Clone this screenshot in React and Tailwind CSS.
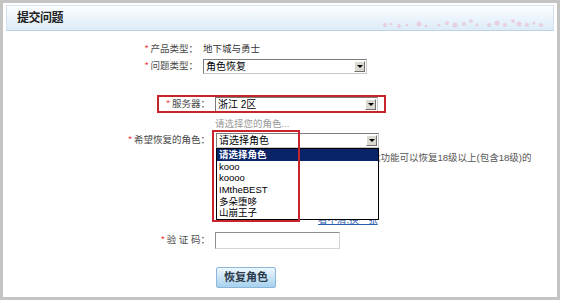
import React from 'react'

const Req = ({ children, className = '' }) => (
  <div className={`text-right text-[#484848] ${className}`}>
    <span className="text-[#e33] mr-[2px] relative -top-[1px]">*</span>
    {children}
  </div>
)

const Select = ({ value, className = '' }) => (
  <div className={`flex items-center h-[15px] bg-white border border-[#7b7b7b] border-r-[#c9c9c9] border-b-[#c9c9c9] ${className}`}>
    <div className="flex-1 pl-[2px] text-[10px] text-black leading-[13px] truncate">{value}</div>
    <div className="w-[11px] h-[11px] mr-[1px] flex items-center justify-center bg-[#dcd9d0] border border-t-white border-l-white border-b-[#707070] border-r-[#707070]">
      <div className="w-0 h-0 border-l-[3px] border-r-[3px] border-t-[3px] border-x-transparent border-t-black" />
    </div>
  </div>
)

const Flowers = () => (
  <svg width="170" height="14" viewBox="0 0 170 14" className="absolute right-[4px] bottom-[1px]">
    {[
      [6, 10, 2], [12, 9, 1.5], [20, 11, 2], [28, 10, 1.5], [40, 9, 2.5], [47, 11, 1.5],
      [60, 10, 1.5], [68, 8, 2], [76, 10, 2.5], [85, 9, 2], [92, 6, 2], [98, 10, 1.5],
      [110, 10, 2], [118, 8, 2.5], [126, 10, 2], [134, 6, 2], [140, 9, 2.5], [148, 10, 2],
      [155, 8, 1.5], [162, 10, 2]
    ].map(([x, y, r], i) => (
      <circle key={i} cx={x} cy={y} r={r} fill="#e9a9c2" opacity="0.45" />
    ))}
  </svg>
)

export default function App() {
  const roles = ['kooo', 'koooo', 'IMtheBEST', '多朵堕哆', '山崩王子']

  return (
    <div className="w-[564px] h-[303px] bg-white overflow-hidden font-['Liberation_Sans','Noto_Sans_CJK_SC',sans-serif] text-[9.5px]">
      <div className="relative w-[560px] h-[300px] border-[3px] border-[#c4c4c4]">
        {/* header */}
        <div className="relative mx-[3px] mt-[2px] h-[26px] border border-[#d3e2ee] border-b-[#bfd2e2] bg-gradient-to-b from-[#fbfdff] to-[#dcecf8] flex items-center pl-[10px]">
          <span className="text-[12px] font-bold text-[#222] tracking-[-0.5px]">提交问题</span>
          <Flowers />
        </div>

        {/* form */}
        <div className="flex flex-col">
          <div className="flex items-center h-[14px] mt-[11px]">
            <Req className="w-[195px]">产品类型：</Req>
            <div className="ml-[5px] text-[#333]">地下城与勇士</div>
          </div>

          <div className="flex items-center h-[15px] mt-[3px]">
            <Req className="w-[195px]">问题类型：</Req>
            <Select value="角色恢复" className="ml-[5px] w-[164px]" />
          </div>

          <div className="flex items-center h-[15px] mt-[23px]">
            <Req className="w-[207px]">服务器：</Req>
            <Select value="浙江 2区" className="ml-[5px] w-[163px]" />
          </div>

          <div className="h-[12px] mt-[6px] pl-[212px] text-[#999] leading-[12px]">请选择您的角色...</div>

          <div className="flex items-center h-[15px] mt-[3px]">
            <Req className="w-[207px]">希望恢复的角色：</Req>
            <Select value="请选择角色" className="ml-[6px] w-[163px]" />
          </div>

          <div className="h-[12px] mt-[4px] pl-[368px] text-[#555] leading-[12px] whitespace-nowrap">
            此功能可以恢复18级以上(包含18级)的
          </div>

          <div className="h-[12px] mt-[50px] pl-[315px] leading-[12px]">
            <span className="text-[#2d5fb0] underline">看不清,换一张</span>
          </div>

          <div className="flex items-center h-[17px] mt-[6px]">
            <Req className="w-[207px]">验 证 码：</Req>
            <div className="ml-[5px] w-[125px] h-[17px] bg-white border border-[#8e8e8e] border-r-[#d4d4d4] border-b-[#d4d4d4]" />
          </div>

          <div className="mt-[18px] pl-[213px]">
            <div className="w-[60px] h-[21px] flex items-center justify-center rounded-[2px] border border-[#8db7d9] bg-gradient-to-b from-[#eef7fd] to-[#a6d1ef] text-[11px] font-bold text-[#2b3a4a]">
              恢复角色
            </div>
          </div>
        </div>

        {/* open dropdown list */}
        <div className="absolute left-[213px] top-[145px] w-[163px] bg-white border border-black text-[9.5px] leading-[11.7px] text-black">
          <div className="h-[11.7px] bg-[#0a246a] text-white font-bold pl-[2px]">请选择角色</div>
          {roles.map((r) => (
            <div key={r} className="h-[11.7px] pl-[2px]">{r}</div>
          ))}
        </div>

        {/* red annotation boxes */}
        <div className="absolute left-[154px] top-[92px] w-[229px] h-[18px] border-2 border-[#c7242c]" />
        <div className="absolute left-[209px] top-[127px] w-[88px] h-[92px] border-2 border-[#c7242c]" />
      </div>
    </div>
  )
}
